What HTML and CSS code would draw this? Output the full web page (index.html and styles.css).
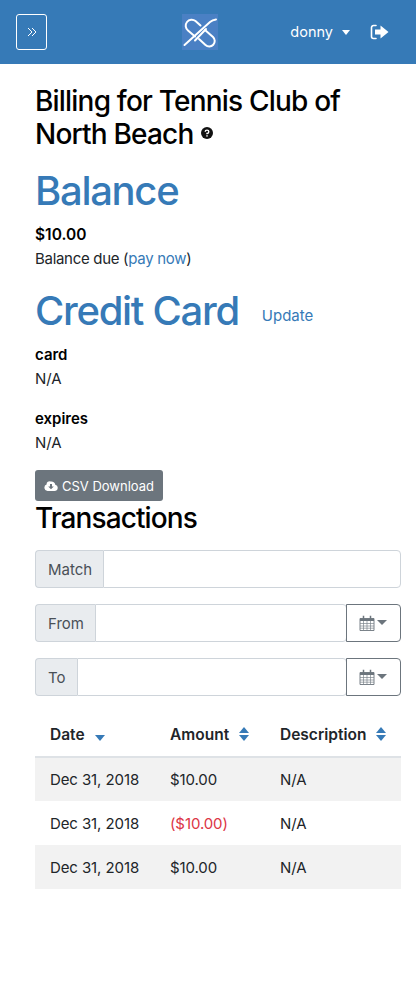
FILE: index.html
```html
<!DOCTYPE html>
<html lang="en">
<head>
    <meta charset="UTF-8">
    <meta name="viewport" content="width=device-width, initial-scale=1.0">
    <title>Billing</title>
    <link rel="stylesheet" href="styles.css">
</head>
<body>
    <nav class="navbar">
        <button class="sidebar-toggle" type="button">
            <svg width="10" height="10" viewBox="0 0 10 10" fill="none" stroke="#fff" stroke-width="1"><path d="M1 1l4 4-4 4M5 1l4 4-4 4"/></svg>
        </button>
        <svg class="logo" width="36" height="36" viewBox="0 0 36 36">
            <rect width="36" height="36" fill="#4a80c4"/>
            <g fill="none" stroke="#fff" stroke-width="2" stroke-linecap="round">
                <path d="M2.500 31L28 8Q30.500 6 34 5.500"/>
                <path d="M13 22.500L6 16.500A5.400 5.400 0 0 1 13.500 7L18.500 11.500"/>
                <path d="M23 16L31 23A5.400 5.400 0 0 1 23.500 31L17 25"/>
                <path d="M13 26.500L24 15"/>
            </g>
        </svg>
        <div class="user-menu">
            <span class="user-name">donny</span>
            <span class="caret"></span>
            <svg class="logout" width="19" height="16" viewBox="0 0 19 16">
                <path d="M6 1.500H3.500A2 2 0 0 0 1.500 3.500V12.500A2 2 0 0 0 3.500 14.500H6" fill="none" stroke="#fff" stroke-width="1.600" stroke-linecap="round"/>
                <path d="M5 5.500H10.500V1.500L18.500 8L10.500 14.500V10.500H5Z" fill="#fff"/>
            </svg>
        </div>
    </nav>

    <main class="content">
        <h2 class="page-title">Billing for Tennis Club of North Beach
            <svg class="help" width="12" height="12" viewBox="0 0 12 12">
                <circle cx="6" cy="6" r="6" fill="#111"/>
                <path d="M4.200 4.800A1.800 1.700 0 1 1 6 6.500V7.300" fill="none" stroke="#fff" stroke-width="1.400"/>
                <rect x="5.300" y="8.200" width="1.400" height="1.400" fill="#fff"/>
            </svg>
        </h2>

        <h1 class="section-title">Balance</h1>
        <div class="amount">$10.00</div>
        <div class="balance-due">Balance due (<a href="#">pay now</a>)</div>

        <div class="card-heading">
            <h1 class="section-title">Credit Card</h1>
            <a href="#" class="update-link">Update</a>
        </div>
        <dl class="card-info">
            <dt>card</dt>
            <dd>N/A</dd>
            <dt>expires</dt>
            <dd>N/A</dd>
        </dl>

        <button class="btn-download" type="button">
            <svg width="14" height="11" viewBox="0 0 14 11">
                <path d="M3.500 11A3.300 3.300 0 0 1 2.600 4.600 3 3 0 0 1 6.800 1.500 3.800 3.800 0 0 1 11.300 4.700 3.200 3.200 0 0 1 10.500 11Z" fill="#fff"/>
                <path d="M6 4H8V6.500H9.800L7 9.300 4.200 6.500H6Z" fill="#6c757d"/>
            </svg>
            CSV Download
        </button>
        <h2 class="transactions-title">Transactions</h2>

        <div class="input-group">
            <span class="input-label">Match</span>
            <input class="input-field" type="text">
        </div>
        <div class="input-group">
            <span class="input-label">From</span>
            <input class="input-field" type="text">
            <button class="date-btn" type="button">
                <svg width="16" height="16" viewBox="0 0 16 16">
                    <path d="M1 3.500H15V15.500H1Z" fill="#fff" stroke="#6c757d" stroke-width=".9"/>
                    <path d="M1 3.500H15V6H1Z" fill="#6c757d"/>
                    <path d="M1 8.500H15M1 11H15M1 13.200H15M4.500 6V15M8 6V15M11.500 6V15" stroke="#7d858c" stroke-width=".7"/>
                    <path d="M4.500 .800V4M11.500 .800V4" stroke="#6c757d" stroke-width="1.500"/>
                </svg>
                <span class="caret caret-grey"></span>
            </button>
        </div>
        <div class="input-group">
            <span class="input-label">To</span>
            <input class="input-field" type="text">
            <button class="date-btn" type="button">
                <svg width="16" height="16" viewBox="0 0 16 16">
                    <path d="M1 3.500H15V15.500H1Z" fill="#fff" stroke="#6c757d" stroke-width=".9"/>
                    <path d="M1 3.500H15V6H1Z" fill="#6c757d"/>
                    <path d="M1 8.500H15M1 11H15M1 13.200H15M4.500 6V15M8 6V15M11.500 6V15" stroke="#7d858c" stroke-width=".7"/>
                    <path d="M4.500 .800V4M11.500 .800V4" stroke="#6c757d" stroke-width="1.500"/>
                </svg>
                <span class="caret caret-grey"></span>
            </button>
        </div>

        <table class="transactions">
            <thead>
                <tr>
                    <th class="col-date">Date <span class="sort sort-desc"></span></th>
                    <th class="col-amount">Amount <span class="sort"></span></th>
                    <th>Description <span class="sort"></span></th>
                </tr>
            </thead>
            <tbody>
                <tr>
                    <td>Dec 31, 2018</td>
                    <td>$10.00</td>
                    <td>N/A</td>
                </tr>
                <tr>
                    <td>Dec 31, 2018</td>
                    <td class="negative">($10.00)</td>
                    <td>N/A</td>
                </tr>
                <tr>
                    <td>Dec 31, 2018</td>
                    <td>$10.00</td>
                    <td>N/A</td>
                </tr>
            </tbody>
        </table>
    </main>
</body>
</html>
```

FILE: styles.css
```css
* {
    box-sizing: border-box;
}

body {
    font-family: Inter, "Liberation Sans", sans-serif;
    font-size: 15px;
    line-height: 24px;
    margin: 0;
    color: #212529;
    background: #fff;
    min-height: 981px;
}

a {
    color: #367ab7;
    text-decoration: none;
}

.navbar {
    position: relative;
    display: flex;
    align-items: center;
    justify-content: space-between;
    height: 64px;
    padding: 0 27px 0 16px;
    background: #367ab7;
}

.sidebar-toggle {
    display: flex;
    align-items: center;
    justify-content: center;
    width: 31px;
    height: 36px;
    padding: 0;
    background: transparent;
    border: 1px solid #fff;
    border-radius: 3px;
}

.logo {
    position: absolute;
    left: 182px;
    top: 14px;
}

.user-menu {
    display: flex;
    align-items: center;
    color: #fff;
    font-size: 14.500px;
}

.user-name {
    margin-right: 9px;
}

.caret {
    display: inline-block;
    width: 0;
    height: 0;
    border-top: 5px solid #fff;
    border-left: 4.500px solid transparent;
    border-right: 4.500px solid transparent;
}

.caret-grey {
    border-top-color: #6c757d;
    border-left-width: 5px;
    border-right-width: 5px;
    margin-left: 2px;
}

.logout {
    margin-left: 20px;
}

.content {
    padding: 21px 15px 0 35px;
}

.page-title {
    font-size: 28px;
    font-weight: 500;
    line-height: 33px;
    letter-spacing: -0.8px;
    margin: 0 0 16px;
    color: #000;
}

.help {
    margin-left: 1px;
    vertical-align: 5px;
}

.section-title {
    font-size: 40px;
    font-weight: 500;
    line-height: 48px;
    letter-spacing: -1.300px;
    margin: 0 0 8px;
    color: #367ab7;
}

.amount {
    font-size: 15.500px;
    font-weight: 600;
    color: #000;
}

.balance-due {
    letter-spacing: -0.3px;
}

.card-heading {
    display: flex;
    align-items: center;
    margin-top: 16px;
}

.card-heading .section-title {
    margin-bottom: 0;
}

.update-link {
    margin-left: 23px;
    margin-top: 10px;
}

.card-info {
    margin: 8px 0 0;
}

.card-info dt {
    font-weight: 600;
    color: #000;
}

.card-info dd {
    margin: 0 0 16px;
}

.btn-download {
    display: flex;
    align-items: center;
    justify-content: center;
    gap: 4px;
    width: 128px;
    height: 31px;
    padding: 0;
    margin: -1px 0 1px;
    color: #fff;
    font-family: inherit;
    font-size: 13px;
    background: #6c757d;
    border: 0;
    border-radius: 3px;
}

.transactions-title {
    font-size: 28px;
    font-weight: 500;
    line-height: 33.600px;
    letter-spacing: -0.9px;
    margin: 0 0 14px;
    color: #000;
}

.input-group {
    display: flex;
    height: 38px;
    margin-bottom: 16px;
}

.input-label {
    padding: 7px 11px 5px 12px;
    color: #495057;
    background: #e9ecef;
    border: 1px solid #ced4da;
    border-right: 0;
    border-radius: 4px 0 0 4px;
}

.input-field {
    flex: 1;
    min-width: 0;
    background: #fff;
    border: 1px solid #ced4da;
    border-radius: 0 4px 4px 0;
}

.date-btn {
    display: flex;
    align-items: center;
    justify-content: center;
    width: 55px;
    padding: 0 2px 0 0;
    margin-left: -1px;
    background: #fff;
    border: 1px solid #6c757d;
    border-radius: 0 4px 4px 0;
}

.transactions {
    width: 100%;
    border-collapse: collapse;
    margin-top: 17px;
    table-layout: fixed;
}

.transactions th {
    height: 44px;
    padding: 2px 0 0 15px;
    font-size: 15.500px;
    font-weight: 600;
    text-align: left;
    white-space: nowrap;
    border-bottom: 2px solid #dee2e6;
}

.col-date {
    width: 120px;
}

.col-amount {
    width: 110px;
}

.transactions td {
    height: 44px;
    padding: 2px 0 0 15px;
    letter-spacing: -0.1px;
    white-space: nowrap;
}

.transactions tbody tr:nth-child(odd) {
    background: #f2f2f2;
}

.negative {
    color: #dc3545;
}

.sort {
    position: relative;
    display: inline-block;
    width: 10px;
    height: 14px;
    margin-left: 6px;
    vertical-align: -1px;
}

.sort::before,
.sort::after {
    content: "";
    position: absolute;
    left: 0;
    border-left: 5px solid transparent;
    border-right: 5px solid transparent;
}

.sort::before {
    top: 0;
    border-bottom: 6px solid #367ab7;
}

.sort::after {
    bottom: 0;
    border-top: 6px solid #367ab7;
}

.sort-desc {
    margin-left: 6px;
}

.sort-desc::before {
    display: none;
}
```
